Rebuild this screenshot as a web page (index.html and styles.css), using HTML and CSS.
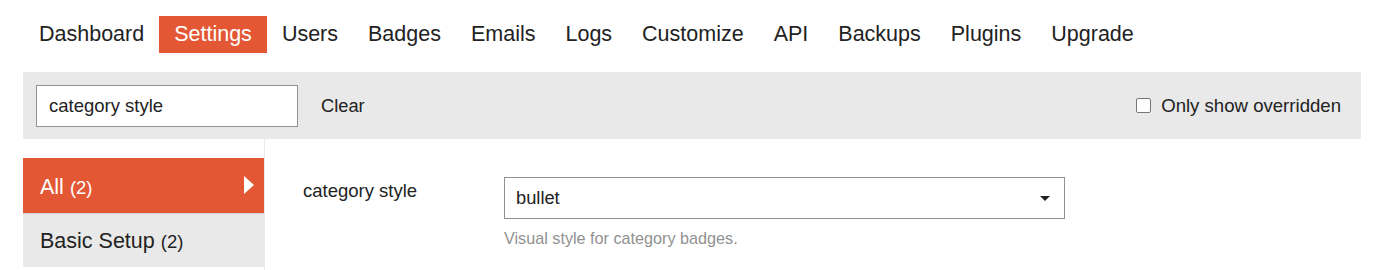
FILE: index.html
```html
<!DOCTYPE html>
<html>
<head>
    <title>Admin - Settings</title>
    <link rel="stylesheet" href="styles.css">
</head>
<body>
    <ul class="admin-nav">
        <li><a href="#">Dashboard</a></li>
        <li class="active"><a href="#">Settings</a></li>
        <li><a href="#">Users</a></li>
        <li><a href="#">Badges</a></li>
        <li><a href="#">Emails</a></li>
        <li><a href="#">Logs</a></li>
        <li><a href="#">Customize</a></li>
        <li><a href="#">API</a></li>
        <li><a href="#">Backups</a></li>
        <li><a href="#">Plugins</a></li>
        <li><a href="#">Upgrade</a></li>
    </ul>

    <div class="admin-controls">
        <input type="text" class="filter-input" value="category style">
        <span class="clear-link">Clear</span>
        <label class="toggle-overridden">
            <span class="check-box"></span>
            Only show overridden
        </label>
    </div>

    <div class="admin-body">
        <ul class="admin-sidebar">
            <li class="active">All <span class="count">(2)</span><span class="arrow"></span></li>
            <li>Basic Setup <span class="count">(2)</span></li>
        </ul>

        <div class="admin-content">
            <div class="setting">
                <div class="setting-label">category style</div>
                <div class="setting-value">
                    <div class="select-box">
                        <span>bullet</span>
                        <span class="caret"></span>
                    </div>
                    <div class="desc">Visual style for category badges.</div>
                </div>
            </div>
        </div>
    </div>
</body>
</html>
```

FILE: styles.css
```css
body {
    font-family: "Liberation Sans", Arial, sans-serif;
    color: #222;
    margin: 0;
    background-color: #fff;
}

.admin-nav {
    list-style: none;
    display: flex;
    margin: 16px 0 0 24px;
    padding: 0;
}

.admin-nav li a {
    display: block;
    padding: 0 15px;
    line-height: 37px;
    font-size: 21.5px;
    color: #222;
    text-decoration: none;
}

.admin-nav li.active a {
    background-color: #e45735;
    color: #fff;
}

.admin-controls {
    display: flex;
    align-items: center;
    height: 67px;
    margin: 19px 15px 0 23px;
    padding: 0 20px 0 13px;
    background-color: #e9e9e9;
}

.filter-input {
    box-sizing: border-box;
    width: 262px;
    height: 42px;
    padding: 0 12px;
    border: 1px solid #919191;
    font-family: inherit;
    font-size: 18.5px;
    color: #222;
    background: #fff;
}

.clear-link {
    margin-left: 23px;
    font-size: 18.3px;
}

.toggle-overridden {
    margin-left: auto;
    display: flex;
    align-items: center;
    font-size: 18.6px;
}

.check-box {
    box-sizing: border-box;
    width: 15px;
    height: 15px;
    margin-right: 10px;
    border: 1px solid #767676;
    border-radius: 2px;
    background: #fff;
}

.admin-body {
    display: flex;
    margin-left: 23px;
}

.admin-sidebar {
    list-style: none;
    width: 241px;
    margin: 0;
    padding: 19px 0 0 0;
    border-right: 1px solid #e9e9e9;
    min-height: 112px;
}

.admin-sidebar li {
    position: relative;
    height: 53px;
    line-height: 55px;
    padding-left: 17px;
    font-size: 21.5px;
    background-color: #e9e9e9;
}

.admin-sidebar li.active {
    height: 55px;
    line-height: 58px;
    background-color: #e45735;
    color: #fff;
    border-bottom: 1px solid #d1d1d1;
}

.admin-sidebar .count {
    font-size: 18.5px;
}

.admin-sidebar .arrow {
    position: absolute;
    right: 10px;
    top: 18px;
    width: 0;
    height: 0;
    border-left: 10px solid #fff;
    border-top: 9.5px solid transparent;
    border-bottom: 9.5px solid transparent;
}

.admin-content {
    flex: 1;
    padding: 38px 0 0 38px;
}

.setting {
    display: flex;
}

.setting-label {
    width: 201px;
    padding-top: 3px;
    line-height: 22px;
    font-size: 18.5px;
}

.select-box {
    box-sizing: border-box;
    display: flex;
    align-items: center;
    justify-content: space-between;
    width: 561px;
    height: 42px;
    padding: 0 14px 0 11px;
    border: 1px solid #919191;
    font-size: 18.3px;
}

.caret {
    width: 0;
    height: 0;
    border-top: 5px solid #222;
    border-left: 5px solid transparent;
    border-right: 5px solid transparent;
}

.desc {
    margin-top: 9px;
    line-height: 20px;
    font-size: 16.2px;
    color: #919191;
}
```
